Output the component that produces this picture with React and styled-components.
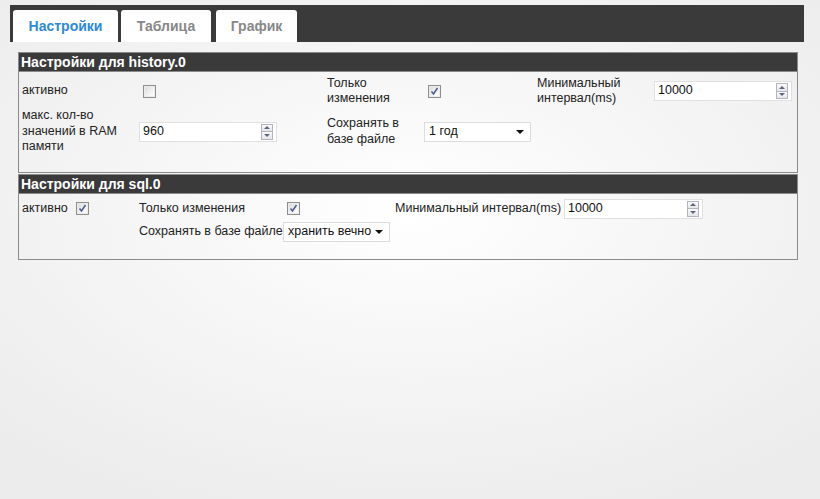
import React from "react";
import styled, { createGlobalStyle } from "styled-components";

const Global = createGlobalStyle`
  html, body { margin: 0; padding: 0; height: 100%; }
  body {
    font-family: "Liberation Sans", Arial, sans-serif;
    background: radial-gradient(ellipse 70% 65% at 50% 42%, #ffffff 0%, #f6f6f6 45%, #ececec 100%);
    color: #222;
  }
  #root { min-height: 100%; }
`;

const Page = styled.div`
  padding: 5px 0 0 10px;
`;

const TabBar = styled.div`
  width: 794px;
  height: 37px;
  box-sizing: border-box;
  background: #3a3a3a;
  padding: 5px 3px 0;
  display: flex;
  align-items: flex-end;
  gap: 3px;
`;

const Tab = styled.div`
  height: 32px;
  box-sizing: border-box;
  width: ${(p) => p.$w}px;
  background: #fff;
  border-radius: 3px 3px 0 0;
  display: flex;
  align-items: center;
  justify-content: center;
  font-weight: bold;
  font-size: 14px;
  color: ${(p) => (p.$active ? "#2d8ad8" : "#888888")};
  margin-left: ${(p) => p.$ml || 0}px;
`;

const Content = styled.div`
  padding: 10px 0 0 8px;
  display: flex;
  flex-direction: column;
  gap: 1px;
  width: 780px;
`;

const Panel = styled.div`
  border: 1px solid #8a8a8a;
  box-sizing: border-box;
  width: 780px;
`;

const PanelHeader = styled.div`
  background: #3a3a3a;
  color: #fff;
  font-weight: bold;
  font-size: 14px;
  height: 18px;
  line-height: 18px;
  padding-left: 2px;
  border-bottom: 1px solid #8a8a8a;
`;

const PanelBody = styled.div`
  display: grid;
  grid-template-columns: ${(p) => p.$cols};
  grid-template-rows: ${(p) => p.$rows};
  row-gap: ${(p) => p.$rowGap}px;
  align-items: center;
  padding: ${(p) => p.$pad};
  font-size: 12.5px;
  line-height: 15.5px;
`;

const Label = styled.div`
  color: #222;
  white-space: nowrap;
`;

const Cell = styled.div`
  display: flex;
  align-items: center;
`;

const Box = styled.span`
  display: inline-block;
  width: 11px;
  height: 11px;
  margin-left: 4px;
  border: 1px solid #8e8e8e;
  background: linear-gradient(135deg, #d8d8d8 0%, #f4f4f4 60%, #ffffff 100%);
  box-shadow: inset 0 0 0 1px #ececec;
  position: relative;
`;

const Check = ({ checked }) => (
  <Box>
    {checked && (
      <svg width="11" height="11" viewBox="0 0 11 11" style={{ position: "absolute", left: 0, top: 0 }}>
        <path d="M2.5 5.5 L4.5 8 L8.5 2" fill="none" stroke="#4d5f8f" strokeWidth="1.6" />
      </svg>
    )}
  </Box>
);

const InputWrap = styled.div`
  width: ${(p) => p.$w}px;
  height: 20px;
  box-sizing: border-box;
  border: 1px solid #e0e0e0;
  background: #fff;
  display: flex;
  align-items: center;
  padding: 0 2px 0 3px;
  font-size: 12.5px;
  color: #111;
`;

const InputText = styled.span`
  flex: 1;
`;

const Spinner = styled.div`
  width: 12px;
  height: 16px;
  display: flex;
  flex-direction: column;
  margin-right: 1px;
`;

const SpinBtn = styled.div`
  flex: 1;
  border: 1px solid #b4b4c0;
  background: linear-gradient(#fafafa, #e6e6ea);
  display: flex;
  align-items: center;
  justify-content: center;
  margin-top: ${(p) => (p.$down ? "-1px" : "0")};
`;

const Tri = styled.span`
  width: 0;
  height: 0;
  border-left: 3px solid transparent;
  border-right: 3px solid transparent;
  ${(p) => (p.$down ? "border-top: 3px solid #5b6680;" : "border-bottom: 3px solid #5b6680;")}
`;

const NumInput = ({ value, w }) => (
  <InputWrap $w={w}>
    <InputText>{value}</InputText>
    <Spinner>
      <SpinBtn>
        <Tri />
      </SpinBtn>
      <SpinBtn $down>
        <Tri $down />
      </SpinBtn>
    </Spinner>
  </InputWrap>
);

const SelectBox = styled.div`
  width: 107px;
  height: 20px;
  box-sizing: border-box;
  border: 1px solid #dcdcdc;
  background: #fff;
  display: flex;
  align-items: center;
  padding: 0 6px 0 4px;
  font-size: 12.5px;
  color: #111;
  white-space: nowrap;
`;

const Arrow = styled.span`
  margin-left: auto;
  width: 0;
  height: 0;
  border-left: 4px solid transparent;
  border-right: 4px solid transparent;
  border-top: 4px solid #111;
`;

const Select = ({ value }) => (
  <SelectBox>
    {value}
    <Arrow />
  </SelectBox>
);

export default function App() {
  return (
    <>
      <Global />
      <Page>
        <TabBar>
          <Tab $active $w={105}>Настройки</Tab>
          <Tab $w={90}>Таблица</Tab>
          <Tab $w={81} $ml={2}>График</Tab>
        </TabBar>
        <Content>
          <Panel>
            <PanelHeader>Настройки для history.0</PanelHeader>
            <PanelBody
              $cols="117px 188px 97px 113px 117px 138px"
              $rows="30px 45px"
              $rowGap={3}
              $pad="4px 0 18px 3px"
            >
              <Label>активно</Label>
              <Cell><Check /></Cell>
              <Label>Только<br />изменения</Label>
              <Cell><Check checked /></Cell>
              <Label>Минимальный<br />интервал(ms)</Label>
              <Cell><NumInput value="10000" w={138} /></Cell>

              <Label>макс. кол-во<br />значений в RAM<br />памяти</Label>
              <Cell><NumInput value="960" w={138} /></Cell>
              <Label>Сохранять в<br />базе файле</Label>
              <Cell><Select value="1 год" /></Cell>
              <span />
              <span />
            </PanelBody>
          </Panel>
          <Panel>
            <PanelHeader>Настройки для sql.0</PanelHeader>
            <PanelBody
              $cols="50px 67px 144px 112px 169px 139px"
              $rows="23px 23px"
              $rowGap={0}
              $pad="3px 0 16px 3px"
            >
              <Label>активно</Label>
              <Cell><Check checked /></Cell>
              <Label>Только изменения</Label>
              <Cell><Check checked /></Cell>
              <Label>Минимальный интервал(ms)</Label>
              <Cell><NumInput value="10000" w={139} /></Cell>

              <span />
              <span />
              <Label>Сохранять в базе файле</Label>
              <Cell><Select value="хранить вечно" /></Cell>
              <span />
              <span />
            </PanelBody>
          </Panel>
        </Content>
      </Page>
    </>
  );
}
